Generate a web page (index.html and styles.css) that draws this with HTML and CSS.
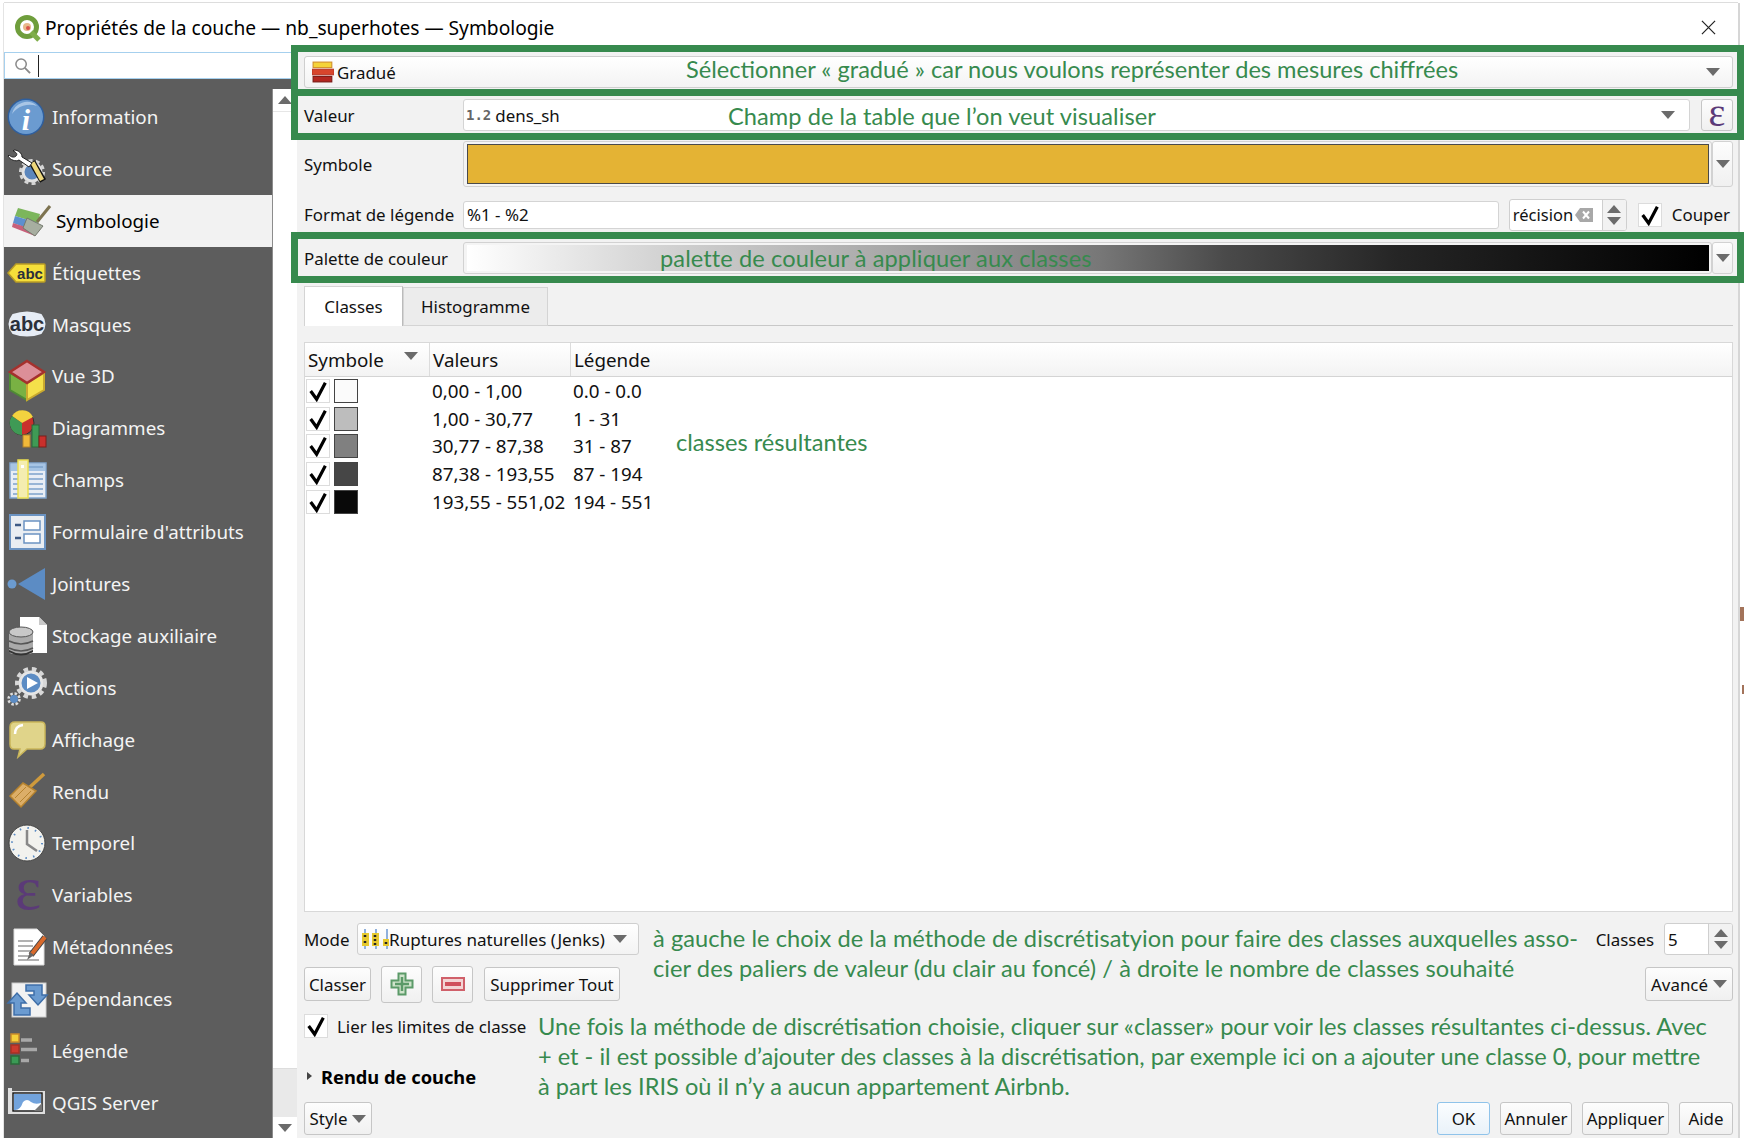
FILE: index.html
```html
<!DOCTYPE html>
<html lang="fr">
<head>
    <meta charset="UTF-8">
    <meta name="viewport" content="width=device-width, initial-scale=1.0">
    <title>Propriétés de la couche</title>
    <link rel="stylesheet" href="styles.css">
</head>
<body>
    <div class="window">
        <div class="titlebar">
            <svg class="logo" viewBox="0 0 28 28">
                <circle cx="13" cy="13" r="9.5" fill="none" stroke="#6f9e3c" stroke-width="5"/>
                <path d="M17 18 L25 26" stroke="#7fae4a" stroke-width="5"/>
                <circle cx="13" cy="13" r="4" fill="#e8b98a"/>
                <circle cx="14" cy="14" r="2" fill="#d9534a"/>
            </svg>
            <span class="title">Propriétés de la couche — nb_superhotes — Symbologie</span>
            <svg class="close" viewBox="0 0 16 16"><path d="M1 1 L15 15 M15 1 L1 15" stroke="#222" stroke-width="1.3"/></svg>
        </div>

        <div class="content">
            <div class="left">
                <div class="search">
                    <svg class="loupe" viewBox="0 0 18 18"><circle cx="7.5" cy="7.5" r="5.5" fill="none" stroke="#8a8a8a" stroke-width="1.6"/><path d="M11.5 11.5 L17 17" stroke="#8a8a8a" stroke-width="2"/></svg>
                    <span class="caret"></span>
                </div>
                <div class="left-body">
                    <ul class="nav">
                        <li class="nav-item">
                            <svg class="icon" viewBox="0 0 40 40">
                                <circle cx="19" cy="20" r="18.5" fill="#2f5f9e"/>
                                <circle cx="19" cy="20" r="17" fill="#6b9bd0"/>
                                <path d="M5 17 A15 15 0 0 1 30 9 A22 22 0 0 0 5 17Z" fill="#a9c6e6"/>
                                <text x="19" y="33" class="icon-i">i</text>
                            </svg>
                            Information
                        </li>
                        <li class="nav-item">
                            <svg class="icon" viewBox="0 0 40 40">
                                <circle cx="25" cy="23" r="9" fill="#5c87bd" stroke="#e2e2e2" stroke-width="3"/>
                                <circle cx="25" cy="23" r="11.5" fill="none" stroke="#d5d5d5" stroke-width="3" stroke-dasharray="4 3.2"/>
                                <path d="M25 13 L36 32" stroke="#111" stroke-width="7"/>
                                <path d="M25.5 13.5 L35 31" stroke="#edd77c" stroke-width="4.5"/>
                                <path d="M1 7 C3 11 9 13 12 11 L22 18 L25 14 L15 8 C15 4 11 1 7 1 L6 2 C9 3 11 5 9 7 C7 9 4 8 2 6Z" fill="#fff" stroke="#222"/>
                            </svg>
                            Source
                        </li>
                        <li class="nav-item active">
                            <svg class="icon" viewBox="0 0 40 40">
                                <path d="M7 7 L29 13 L27 22 L4 15Z" fill="#7cb65c"/>
                                <path d="M4 15 L27 22 L24 30 L2 22Z" fill="#5d8fcf"/>
                                <path d="M2 22 L24 29 L24 35 L1 26Z" fill="#c8607a"/>
                                <path d="M26 21 L39 5" stroke="#7d7350" stroke-width="3"/>
                                <path d="M16 17 L32 25 L24 35 L12 27Z" fill="#a7aea0" stroke="#74796d"/>
                            </svg>
                            Symbologie
                        </li>
                        <li class="nav-item">
                            <svg class="icon" viewBox="0 0 40 40">
                                <path d="M1 20 L9 11 L37 11 Q38 11 38 12 L38 28 Q38 29 37 29 L9 29Z" fill="#f5df3a" stroke="#b89c26" stroke-width="1.5"/>
                                <text x="23" y="25.5" class="icon-abc small">abc</text>
                            </svg>
                            Étiquettes
                        </li>
                        <li class="nav-item">
                            <svg class="icon" viewBox="0 0 40 40">
                                <path d="M6 10 Q20 5 34 10 Q41 19 34 28 Q20 33 6 28 Q-1 19 6 10Z" fill="#e6ecf5" stroke="#e6ecf5" stroke-width="2"/>
                                <text x="20" y="26" class="icon-abc">abc</text>
                            </svg>
                            Masques
                        </li>
                        <li class="nav-item">
                            <svg class="icon" viewBox="0 0 40 40">
                                <path d="M3 17 L20 27 L20 44 L3 34Z" fill="#79b143" stroke="#4f8a35" stroke-width="2"/>
                                <path d="M37 17 L20 27 L20 44 L37 34Z" fill="#f5e04a" stroke="#c9a92f" stroke-width="2"/>
                                <path d="M20 5 L37 16 L20 27 L3 16Z" fill="#dc8f98" stroke="#a5312d" stroke-width="2.5"/>
                            </svg>
                            Vue 3D
                        </li>
                        <li class="nav-item">
                            <svg class="icon" viewBox="0 0 40 40">
                                <circle cx="15" cy="15" r="12" fill="#c9302c" stroke="#333" stroke-width="1"/>
                                <path d="M15 15 L5 8 A12 12 0 0 1 26 9Z" fill="#f3d33f"/>
                                <path d="M15 15 L5 8 A12 12 0 0 0 15 27Z" fill="#3f9a55"/>
                                <rect x="25" y="17" width="7" height="22" fill="#3f9a55" stroke="#2a6a3a"/>
                                <rect x="16" y="27" width="7" height="12" fill="#f0b93a" stroke="#b3832a"/>
                                <rect x="32" y="28" width="7" height="11" fill="#c9302c" stroke="#7a1e1a"/>
                            </svg>
                            Diagrammes
                        </li>
                        <li class="nav-item">
                            <svg class="icon" viewBox="0 0 40 40">
                                <rect x="3" y="3" width="36" height="35" fill="#e9eef5" stroke="#7ea3cc" stroke-width="1.5"/>
                                <rect x="4" y="4" width="34" height="7" fill="#a6c4e4"/>
                                <path d="M20 7 H36 M6 14 H36 M6 19 H36 M6 24 H36 M6 29 H36 M6 34 H36" stroke="#7ea3cc" stroke-width="1.6"/>
                                <rect x="11" y="0" width="10" height="38" fill="#f4edb0" stroke="#ecdf50" stroke-width="1.5"/>
                                <rect x="14" y="5" width="3" height="3" fill="#fff"/>
                            </svg>
                            Champs
                        </li>
                        <li class="nav-item">
                            <svg class="icon" viewBox="0 0 40 40">
                                <rect x="3" y="3" width="35" height="34" fill="#e9edf2" stroke="#6b93c2" stroke-width="2"/>
                                <rect x="17" y="9" width="16" height="9" fill="#fff" stroke="#6b93c2" stroke-width="1.5"/>
                                <rect x="17" y="22" width="16" height="9" fill="#fff" stroke="#6b93c2" stroke-width="1.5"/>
                                <path d="M8 13 H14 M8 26 H14" stroke="#3d5a85" stroke-width="2.5"/>
                            </svg>
                            Formulaire d'attributs
                        </li>
                        <li class="nav-item">
                            <svg class="icon" viewBox="0 0 40 40">
                                <circle cx="5" cy="20" r="4.5" fill="#6b9bd0"/>
                                <path d="M11 20 L38 4 L38 36Z" fill="#5c8cc4"/>
                            </svg>
                            Jointures
                        </li>
                        <li class="nav-item">
                            <svg class="icon" viewBox="0 0 40 40">
                                <path d="M13 1 L32 1 L40 9 L40 37 L13 37Z" fill="#fff"/>
                                <path d="M32 1 L40 9 L32 9Z" fill="#c9c9c9"/>
                                <rect x="2" y="14" width="24" height="24" rx="4" fill="#aaa"/>
                                <ellipse cx="14" cy="16" rx="12" ry="5" fill="#c8c8c8" stroke="#555"/>
                                <path d="M2 25 Q14 31 26 25 M2 32 Q14 38 26 32" fill="none" stroke="#555" stroke-width="1.5"/>
                                <path d="M2 34 Q14 41 26 34 L26 36 Q14 43 2 36Z" fill="#333"/>
                            </svg>
                            Stockage auxiliaire
                        </li>
                        <li class="nav-item">
                            <svg class="icon" viewBox="0 0 40 40">
                                <circle cx="24" cy="15" r="11" fill="#5c8cc4" stroke="#e6e6e6" stroke-width="3"/>
                                <circle cx="24" cy="15" r="14" fill="none" stroke="#d8d8d8" stroke-width="4" stroke-dasharray="4.5 3.8"/>
                                <path d="M20 9 L31 15 L20 21Z" fill="#fff"/>
                                <circle cx="7" cy="31" r="4" fill="#5c8cc4"/>
                                <circle cx="7" cy="31" r="5.5" fill="none" stroke="#ddd" stroke-width="2.5" stroke-dasharray="2.5 1.8"/>
                            </svg>
                            Actions
                        </li>
                        <li class="nav-item">
                            <svg class="icon" viewBox="0 0 40 40">
                                <path d="M8 2 L34 2 Q38 2 38 6 L38 24 Q38 29 33 29 L20 29 L11 37 L13 29 L7 29 Q3 29 3 24 L3 7 Q3 2 8 2Z" fill="#e0d48a" stroke="#c9b55a" stroke-width="1.5"/>
                                <path d="M8 14 Q8 6 16 5" fill="none" stroke="#fff" stroke-width="2.5"/>
                            </svg>
                            Affichage
                        </li>
                        <li class="nav-item">
                            <svg class="icon" viewBox="0 0 40 40">
                                <path d="M23 15 L37 2" stroke="#cf9a3c" stroke-width="3.5"/>
                                <path d="M3 24 L16 11 L29 19 L14 35Z" fill="#dcae68" stroke="#b6832f" stroke-width="1.5"/>
                                <path d="M8 26 L19 15 M13 30 L24 19" stroke="#b6832f"/>
                            </svg>
                            Rendu
                        </li>
                        <li class="nav-item">
                            <svg class="icon" viewBox="0 0 40 40">
                                <circle cx="20" cy="20" r="18" fill="#f2f2ee" stroke="#444" stroke-width="1"/>
                                <circle cx="20" cy="20" r="15" fill="none" stroke="#5c8cc4" stroke-width="2" stroke-dasharray="1.5 6.35"/>
                                <path d="M20 7 L20 21 L30 28" fill="none" stroke="#888" stroke-width="2.5"/>
                            </svg>
                            Temporel
                        </li>
                        <li class="nav-item">
                            <svg class="icon" viewBox="0 0 40 40">
                                <text x="21" y="34" class="icon-eps">ε</text>
                            </svg>
                            Variables
                        </li>
                        <li class="nav-item">
                            <svg class="icon" viewBox="0 0 40 40">
                                <path d="M7 2 L30 2 L37 9 L37 38 L7 38Z" fill="#fff" stroke="#ddd"/>
                                <path d="M11 14 H26 M11 19 H26 M11 24 H24 M11 29 H22 M11 33 H32" stroke="#999" stroke-width="1.5"/>
                                <path d="M24 28 L38 10" stroke="#444" stroke-width="6"/>
                                <path d="M24 28 L38 10" stroke="#d96a2c" stroke-width="4"/>
                                <path d="M20 33 L23 25 L27 28Z" fill="#666"/>
                            </svg>
                            Métadonnées
                        </li>
                        <li class="nav-item">
                            <svg class="icon" viewBox="0 0 40 40">
                                <rect x="5" y="4" width="34" height="34" fill="#f2f2f2" stroke="#ccc"/>
                                <path d="M1 24 L10 14 L19 24 L14 24 L14 29 L23 29 L23 36 L7 36 L7 24Z" fill="#6b9bd0" stroke="#3e6ea8" stroke-width="1.5"/>
                                <path d="M19 6 L35 6 L35 16 L40 16 L31 26 L22 16 L27 16 L27 12 L19 12Z" fill="#6b9bd0" stroke="#3e6ea8" stroke-width="1.5"/>
                            </svg>
                            Dépendances
                        </li>
                        <li class="nav-item">
                            <svg class="icon" viewBox="0 0 40 40">
                                <rect x="4" y="3" width="8" height="8" fill="#f5cf3a" stroke="#c98a2b" stroke-width="1.5"/>
                                <rect x="4" y="14" width="8" height="8" fill="#cc3a2e" stroke="#a93024" stroke-width="1.5"/>
                                <rect x="4" y="25" width="8" height="8" fill="#3a9a55" stroke="#2a6a3a" stroke-width="1.5"/>
                                <path d="M14 9 H25 M14 18.5 H30 M14 29.5 H22" stroke="#a8a8a8" stroke-width="3.5"/>
                            </svg>
                            Légende
                        </li>
                        <li class="nav-item">
                            <svg class="icon" viewBox="0 0 40 40">
                                <path d="M1 5 H5 V8 H38 V31 H1Z" fill="#dfdfdf"/>
                                <rect x="6" y="10" width="29" height="18" fill="#fff" stroke="#111" stroke-width="1.4"/>
                                <path d="M7 11 H34 V20 Q28 22 24 19 Q20 15 16 19 Q13 28 7 27Z" fill="#72a3dc"/>
                                <path d="M27 28 L35 20 L35 28Z" fill="#777"/>
                            </svg>
                            QGIS Server
                        </li>
                        <li class="nav-item">
                            <svg class="icon" viewBox="0 0 40 40"><path d="M28 3 L34 8 L28 10Z" fill="#eee"/></svg>
                        </li>
                    </ul>
                    <div class="scrollbar">
                        <div class="scroll-btn"><span class="arrow up"></span></div>
                        <div class="scroll-track"></div>
                        <div class="scroll-thumb"></div>
                        <div class="scroll-btn"><span class="arrow"></span></div>
                    </div>
                </div>
            </div>

            <div class="main">
                <div class="combo renderer">
                    <svg class="renderer-icon" viewBox="0 0 20 20">
                        <rect x="1" y="1" width="17" height="5" fill="#f4d33a" stroke="#d18f2a"/>
                        <rect x="0" y="7.5" width="20" height="5" fill="#d8452c" stroke="#b83524"/>
                        <rect x="1" y="14" width="17" height="5" fill="#b3261f" stroke="#7a1915"/>
                    </svg>
                    <span>Gradué</span>
                    <span class="arrow push"></span>
                </div>

                <div class="form-row value-row">
                    <label>Valeur</label>
                    <div class="combo field">
                        <span class="mono">1.2</span><span>dens_sh</span>
                        <span class="arrow push"></span>
                    </div>
                    <div class="btn eps-btn"><span class="eps">ε</span></div>
                </div>

                <div class="form-row symbol-row">
                    <label>Symbole</label>
                    <div class="colour-btn"><div class="symbol-fill"></div></div>
                    <div class="side-btn"><span class="arrow"></span></div>
                </div>

                <div class="form-row format-row">
                    <label>Format de légende</label>
                    <div class="input format-input">%1 - %2</div>
                    <div class="spin precision">
                        <div class="spin-text"><span class="precision-text">récision</span>
                            <svg class="clear" viewBox="0 0 18 14"><path d="M5 0 H18 V14 H5 L0 7Z" fill="#a8a8a8"/><path d="M8 3.5 L14 10.5 M14 3.5 L8 10.5" stroke="#fff" stroke-width="2"/></svg>
                        </div>
                        <div class="spin-btns"><span class="arrow up"></span><span class="arrow"></span></div>
                    </div>
                    <div class="checkbox"><svg viewBox="0 0 24 24"><path d="M4 12 L10.5 21 L20 3" fill="none" stroke="#000" stroke-width="3.5"/></svg></div>
                    <span class="couper">Couper</span>
                </div>

                <div class="form-row palette-row">
                    <label>Palette de couleur</label>
                    <div class="colour-btn"><div class="ramp"></div></div>
                    <div class="side-btn"><span class="arrow"></span></div>
                </div>

                <div class="tabs">
                    <div class="tab current">Classes</div>
                    <div class="tab">Histogramme</div>
                </div>

                <div class="table">
                    <div class="table-head">
                        <div class="th sym">Symbole<span class="arrow"></span></div>
                        <div class="th">Valeurs</div>
                        <div class="th last">Légende</div>
                    </div>
                    <div class="tr">
                        <div class="td-sym"><div class="checkbox"><svg viewBox="0 0 24 24"><path d="M4 12 L10.5 21 L20 3" fill="none" stroke="#000" stroke-width="3.5"/></svg></div><span class="swatch s1"></span></div>
                        <div>0,00 - 1,00</div><div>0.0 - 0.0</div>
                    </div>
                    <div class="tr">
                        <div class="td-sym"><div class="checkbox"><svg viewBox="0 0 24 24"><path d="M4 12 L10.5 21 L20 3" fill="none" stroke="#000" stroke-width="3.5"/></svg></div><span class="swatch s2"></span></div>
                        <div>1,00 - 30,77</div><div>1 - 31</div>
                    </div>
                    <div class="tr">
                        <div class="td-sym"><div class="checkbox"><svg viewBox="0 0 24 24"><path d="M4 12 L10.5 21 L20 3" fill="none" stroke="#000" stroke-width="3.5"/></svg></div><span class="swatch s3"></span></div>
                        <div>30,77 - 87,38</div><div>31 - 87</div>
                    </div>
                    <div class="tr">
                        <div class="td-sym"><div class="checkbox"><svg viewBox="0 0 24 24"><path d="M4 12 L10.5 21 L20 3" fill="none" stroke="#000" stroke-width="3.5"/></svg></div><span class="swatch s4"></span></div>
                        <div>87,38 - 193,55</div><div>87 - 194</div>
                    </div>
                    <div class="tr">
                        <div class="td-sym"><div class="checkbox"><svg viewBox="0 0 24 24"><path d="M4 12 L10.5 21 L20 3" fill="none" stroke="#000" stroke-width="3.5"/></svg></div><span class="swatch s5"></span></div>
                        <div>193,55 - 551,02</div><div>194 - 551</div>
                    </div>
                </div>

                <div class="mode-row">
                    <span class="mode-label">Mode</span>
                    <div class="combo mode-combo">
                        <svg class="mode-icon" viewBox="0 0 28 20">
                            <path d="M4 0 V20 M15 0 V20 M26 0 V20" stroke="#8fb0dc" stroke-width="2"/>
                            <rect x="1" y="4" width="7" height="13" fill="#e6c92e"/>
                            <rect x="11" y="4" width="7" height="13" fill="#e6c92e"/>
                            <rect x="22" y="10" width="6" height="7" fill="#e6c92e"/>
                            <path d="M4 6 V8 M4 12 V14 M14 6 V8 M14 10 V12 M14 14 V16 M25 13 V15" stroke="#222" stroke-width="2.5"/>
                        </svg>
                        <span class="mode-text">Ruptures naturelles (Jenks)</span>
                        <span class="arrow push"></span>
                    </div>
                    <span class="classes-label">Classes</span>
                    <div class="spin classes-spin">
                        <div class="spin-text">5</div>
                        <div class="spin-btns"><span class="arrow up"></span><span class="arrow"></span></div>
                    </div>
                </div>

                <div class="action-row">
                    <div class="btn classer">Classer</div>
                    <div class="btn icon-btn">
                        <svg viewBox="0 0 24 24"><path d="M8.5 1.5 H15.5 V8.5 H22.5 V15.5 H15.5 V22.5 H8.5 V15.5 H1.5 V8.5 H8.5Z" fill="#cfe3cb" stroke="#5b9a68" stroke-width="2"/><path d="M12 5 V19 M5 12 H19" stroke="#5b9a68" stroke-width="2.5"/></svg>
                    </div>
                    <div class="btn icon-btn">
                        <svg viewBox="0 0 24 16"><rect x="1" y="2" width="22" height="12" fill="#f3d5d5" stroke="#d0606a" stroke-width="2"/><rect x="4" y="6" width="16" height="4" fill="#d0505c"/></svg>
                    </div>
                    <div class="btn supprimer">Supprimer Tout</div>
                    <div class="btn avance">Avancé<span class="arrow"></span></div>
                </div>

                <div class="link-row">
                    <div class="checkbox"><svg viewBox="0 0 24 24"><path d="M4 12 L10.5 21 L20 3" fill="none" stroke="#000" stroke-width="3.5"/></svg></div>
                    <span>Lier les limites de classe</span>
                </div>

                <div class="section-row"><span class="arrow right"></span><b>Rendu de couche</b></div>

                <div class="footer-row">
                    <div class="btn">Style<span class="arrow"></span></div>
                    <div class="btn ok">OK</div>
                    <div class="btn annuler">Annuler</div>
                    <div class="btn appliquer">Appliquer</div>
                    <div class="btn aide">Aide</div>
                </div>
            </div>
        </div>
    </div>

    <!-- annotations drawn over the screenshot -->
    <div class="overlay">
        <div class="frame f1"></div>
        <div class="frame f2"></div>
        <div class="frame f3"></div>
        <p class="note n1">Sélectionner « gradué » car nous voulons représenter des mesures chiffrées</p>
        <p class="note n2">Champ de la table que l’on veut visualiser</p>
        <p class="note n3">palette de couleur à appliquer aux classes</p>
        <p class="note n4">classes résultantes</p>
        <p class="note n5">à gauche le choix de la méthode de discrétisatyion pour faire des classes auxquelles asso-<br>cier des paliers de valeur (du clair au foncé) / à droite le nombre de classes souhaité</p>
        <p class="note n6">Une fois la méthode de discrétisation choisie, cliquer sur «classer» pour voir les classes résultantes ci-dessus. Avec<br>+ et - il est possible d’ajouter des classes à la discrétisation, par exemple ici on a ajouter une classe 0, pour mettre<br>à part les IRIS où il n’y a aucun appartement Airbnb.</p>
        <span class="tick t1"></span>
        <span class="tick t2"></span>
    </div>
</body>
</html>
```

FILE: styles.css
```css
* {
    margin: 0;
    padding: 0;
    box-sizing: border-box;
}

html, body {
    height: 100%;
    overflow: hidden;
}

body {
    font-family: 'Noto Sans', sans-serif;
    font-size: 16.9px;
    color: #111;
    background: #fff;
    position: relative;
}

.window {
    height: 1135px;
    margin: 3px 6px 0 4px;
    display: flex;
    flex-direction: column;
    background: #f2f2f2;
    box-shadow: 0 -1px 0 #ddd, 2px 0 0 #d6d6d6, -1px 0 0 #e4e4e4;
    overflow: hidden;
}

/* title bar */
.titlebar {
    height: 49px;
    flex: none;
    display: flex;
    align-items: center;
    background: #fff;
    padding-left: 10px;
}

.logo {
    width: 28px;
    height: 28px;
    margin-right: 3px;
}

.title {
    font-size: 19.2px;
    color: #000;
}

.close {
    width: 15px;
    height: 15px;
    margin-left: auto;
    margin-right: 22px;
}

.content {
    flex: 1;
    display: flex;
    min-height: 0;
}

/* left column */
.left {
    width: 293px;
    flex: none;
    display: flex;
    flex-direction: column;
    background: #5d5d5d;
}

.search {
    height: 27px;
    flex: none;
    display: flex;
    align-items: center;
    background: #fff;
    border: 1px solid #a6d0ee;
    padding-left: 9px;
}

.loupe {
    width: 17px;
    height: 17px;
}

.caret {
    width: 1px;
    height: 22px;
    background: #222;
    margin-left: 7px;
}

.left-body {
    flex: 1;
    display: flex;
    margin-top: 10px;
    min-height: 0;
}

.nav {
    width: 269px;
    list-style: none;
    overflow: hidden;
    padding-top: 2px;
    background: #5d5d5d;
    border-right: 1px solid #8c8c8c;
}

.nav-item {
    height: 51.9px;
    display: flex;
    align-items: center;
    gap: 5px;
    padding-left: 3px;
    color: #f4f4f4;
    font-size: 18.8px;
}

.nav-item.active {
    background: #f2f2f2;
    color: #000;
    padding-left: 7px;
    gap: 5px;
}

.icon {
    width: 40px;
    height: 40px;
    flex: none;
    overflow: visible;
}

.icon-i {
    font-family: 'Liberation Serif', serif;
    font-style: italic;
    font-weight: bold;
    font-size: 30px;
    fill: #fff;
    text-anchor: middle;
}

.icon-abc {
    font-family: 'Liberation Sans', sans-serif;
    font-weight: bold;
    font-size: 20px;
    fill: #2a2f3a;
    text-anchor: middle;
}

.icon-abc.small {
    font-size: 15px;
}

.icon-eps {
    font-family: 'Liberation Serif', serif;
    font-size: 62px;
    fill: #5b3a78;
    text-anchor: middle;
}

.scrollbar {
    width: 24px;
    display: flex;
    flex-direction: column;
    background: #fff;
}

.scroll-btn {
    height: 23px;
    flex: none;
    display: flex;
    align-items: center;
    justify-content: center;
    background: #fff;
    border-bottom: 1px solid #e6e6e6;
}

.scroll-track {
    flex: 1;
    background: #fff;
}

.scroll-thumb {
    height: 49px;
    flex: none;
    background: #e9e9e9;
    border-top: 1px solid #ddd;
}

.scroll-thumb + .scroll-btn {
    height: 21px;
    border-bottom: 0;
}

/* shared widgets */
.arrow {
    display: inline-block;
    width: 0;
    height: 0;
    flex: none;
    border-left: 7px solid transparent;
    border-right: 7px solid transparent;
    border-top: 8px solid #6b6b6b;
}

.arrow.up {
    border-top: 0;
    border-bottom: 8px solid #6b6b6b;
}

.arrow.right {
    border-top: 4px solid transparent;
    border-bottom: 4px solid transparent;
    border-left: 5px solid #444;
    border-right: 0;
}

.push {
    margin-left: auto;
}

.btn {
    height: 34px;
    display: flex;
    align-items: center;
    justify-content: center;
    padding: 0 4px;
    background: linear-gradient(#fdfdfd, #f0f0f0);
    border: 1px solid #c6c6c6;
    border-radius: 3px;
    white-space: nowrap;
}

.combo {
    height: 32px;
    display: flex;
    align-items: center;
    background: linear-gradient(#fff, #f3f3f3);
    border: 1px solid #cfcfcf;
    border-radius: 3px;
}

.input {
    display: flex;
    align-items: center;
    background: #fff;
    border: 1px solid #d4d4d4;
    border-radius: 3px;
    padding-left: 3px;
}

.checkbox {
    width: 24px;
    height: 24px;
    flex: none;
    background: #fff;
    border: 1px solid #dcdcdc;
}

.checkbox svg {
    display: block;
    width: 22px;
    height: 22px;
}

.spin {
    display: flex;
    background: #fff;
    border: 1px solid #cfcfcf;
    border-radius: 3px;
    overflow: hidden;
}

.spin-text {
    flex: 1;
    display: flex;
    align-items: center;
    overflow: hidden;
    padding-left: 3px;
}

.spin-btns {
    width: 24px;
    flex: none;
    display: flex;
    flex-direction: column;
    align-items: center;
    justify-content: center;
    gap: 4px;
    background: #f2f2f2;
    border-left: 1px solid #cfcfcf;
}

/* main column */
.main {
    flex: 1;
    min-width: 0;
    display: flex;
    flex-direction: column;
    padding: 4px 5px 3px 7px;
}

.renderer {
    flex: none;
    padding: 0 12px 0 7px;
}

.renderer-icon {
    width: 22px;
    height: 24px;
    margin-right: 3px;
}

.form-row {
    display: flex;
    align-items: center;
    flex: none;
}

.form-row label {
    width: 159px;
    flex: none;
}

.value-row {
    height: 32px;
    margin-top: 11px;
}

.field {
    flex: 1;
    padding: 0 14px 0 2px;
    background: #fff;
    border-color: #d4d4d4;
}

.mono {
    font-family: 'DejaVu Sans Mono', monospace;
    font-size: 14px;
    font-weight: bold;
    color: #666;
    margin-right: 4px;
}

.eps-btn {
    width: 32px;
    height: 32px;
    margin-left: 11px;
    padding: 0;
}

.eps {
    font-family: 'Liberation Serif', serif;
    font-size: 40px;
    line-height: 26px;
    height: 30px;
    color: #5b3a78;
}

.symbol-row {
    height: 46px;
    margin-top: 10px;
}

.colour-btn {
    flex: 1;
    height: 100%;
    padding: 2px 2px 2px 3px;
    background: #f4f4f4;
    border: 1px solid #d2d2d2;
    border-radius: 3px;
}

.symbol-fill {
    height: 100%;
    background: #e4b334;
    border: 1px solid #4a4a4a;
}

.side-btn {
    width: 21px;
    height: 100%;
    flex: none;
    display: flex;
    align-items: center;
    justify-content: center;
    background: linear-gradient(#fdfdfd, #f0f0f0);
    border: 1px solid #d2d2d2;
    border-radius: 3px;
}

.format-row {
    height: 31px;
    margin-top: 12px;
}

.format-input {
    flex: 1;
    height: 28px;
}

.precision {
    width: 118px;
    height: 32px;
    margin-left: 10px;
}

.precision .spin-text {
    padding-left: 0;
}

.precision-text {
    flex: none;
    margin-left: 3px;
    font-size: 16.5px;
    white-space: nowrap;
}

.clear {
    width: 18px;
    height: 14px;
    margin-left: 2px;
    flex: none;
}

.format-row .checkbox {
    margin-left: 11px;
}

.couper {
    margin-left: 10px;
    margin-right: 3px;
}

.palette-row {
    height: 32px;
    margin-top: 12px;
}

.ramp {
    height: 100%;
    background: linear-gradient(to right, #fff 0%, #d4d4d4 15%, #a8a8a8 34%, #777 51%, #4a4a4a 61%, #252525 75%, #000 100%);
}

/* tabs */
.tabs {
    height: 40px;
    margin-top: 12px;
    flex: none;
    display: flex;
    border-bottom: 1px solid #c8c8c8;
}

.tab {
    width: 145px;
    height: 39px;
    display: flex;
    align-items: center;
    justify-content: center;
    background: #ececec;
    border: 1px solid #d4d4d4;
    margin-top: 1px;
}

.tab.current {
    width: 99px;
    height: 40px;
    margin-top: 0;
    background: #fff;
    border-right-color: #bbb;
    border-bottom: 0;
}

/* classes table */
.table {
    flex: 1;
    min-height: 0;
    margin-top: 16px;
    background: #fff;
    border: 1px solid #d8d8d8;
    font-size: 18.8px;
}

.table-head {
    height: 34px;
    display: grid;
    grid-template-columns: 125px 141px 1fr;
    background: linear-gradient(#fff, #f3f3f3);
    border-bottom: 1px solid #d4d4d4;
}

.th {
    display: flex;
    align-items: center;
    padding-left: 3px;
    border-right: 1px solid #dcdcdc;
}

.th.last {
    border-right: 0;
}

.th .arrow {
    margin: -8px 0 0 auto;
    margin-right: 11px;
}

.tr {
    height: 27.7px;
    display: grid;
    grid-template-columns: 125px 141px 1fr;
    align-items: center;
    white-space: nowrap;
}

.tr > div:nth-child(2) {
    padding-left: 2px;
}

.tr > div:nth-child(3) {
    padding-left: 2px;
}

.td-sym {
    display: flex;
    align-items: center;
    gap: 4px;
    padding-left: 1px;
}

.swatch {
    width: 24px;
    height: 24px;
    border: 1px solid #444;
}

.s1 { background: #fbfbfb; }
.s2 { background: #bdbdbd; }
.s3 { background: #808080; }
.s4 { background: #464646; }
.s5 { background: #090909; }

/* controls under the table */
.mode-row {
    height: 32px;
    margin-top: 11px;
    flex: none;
    display: flex;
    align-items: center;
}

.mode-label {
    width: 53px;
}

.mode-combo {
    width: 282px;
    padding: 0 11px 0 3px;
}

.mode-icon {
    width: 28px;
    height: 24px;
    flex: none;
}

.mode-text {
    width: 218px;
    overflow: hidden;
    white-space: nowrap;
    font-size: 17.1px;
}

.classes-label {
    margin-left: auto;
}

.classes-spin {
    width: 69px;
    height: 32px;
    margin-left: 10px;
}

.action-row {
    height: 36px;
    margin-top: 11px;
    flex: none;
    display: flex;
    align-items: center;
    gap: 10px;
}

.classer {
    width: 67px;
}

.icon-btn {
    width: 41px;
    height: 37px;
}

.icon-btn svg {
    width: 24px;
    height: 24px;
}

.supprimer {
    width: 136px;
    margin-left: 1px;
}

.avance {
    width: 88px;
    margin-left: auto;
    gap: 5px;
}

.link-row {
    height: 24px;
    margin-top: 12px;
    flex: none;
    display: flex;
    align-items: center;
    gap: 9px;
}

.section-row {
    height: 24px;
    margin-top: 26px;
    flex: none;
    display: flex;
    align-items: center;
    gap: 9px;
    padding-left: 3px;
}

.section-row b {
    font-weight: 700;
    font-size: 18.3px;
    color: #000;
}

.footer-row {
    height: 33px;
    margin-top: 14px;
    flex: none;
    display: flex;
    align-items: center;
    gap: 10px;
}

.footer-row .btn {
    height: 33px;
}

.footer-row .btn:first-child {
    width: 68px;
    gap: 5px;
}

.ok {
    width: 53px;
    margin-left: auto;
    background: linear-gradient(#fbfdff, #e9f2f9);
    border-color: #8fc3ea;
}

.annuler {
    width: 72px;
}

.appliquer {
    width: 87px;
}

.aide {
    width: 54px;
}

/* green annotations */
.overlay {
    position: absolute;
    inset: 0;
    pointer-events: none;
}

.frame {
    position: absolute;
    left: 291px;
    right: 0;
    border: 7px solid #378a4e;
}

.f1 { top: 45px; height: 51px; }
.f2 { top: 89px; height: 51px; }
.f3 { top: 232px; height: 51px; }

.note {
    position: absolute;
    font-family: 'Lato', sans-serif;
    color: #378a4e;
    font-size: 23.6px;
    line-height: 30px;
    white-space: nowrap;
}

.n1 { left: 686px; top: 54px; }
.n2 { left: 728px; top: 101px; letter-spacing: 0.06px; }
.n3 { left: 660px; top: 243px; letter-spacing: 0.1px; }
.n4 { left: 676px; top: 427px; }
.n5 { left: 653px; top: 923px; letter-spacing: 0.07px; }
.n6 { left: 538px; top: 1011px; }

.tick {
    position: absolute;
    right: 0;
    width: 4px;
    background: #a3735a;
}

.t1 { top: 607px; height: 14px; }
.t2 { top: 685px; height: 9px; width: 2px; }
```
